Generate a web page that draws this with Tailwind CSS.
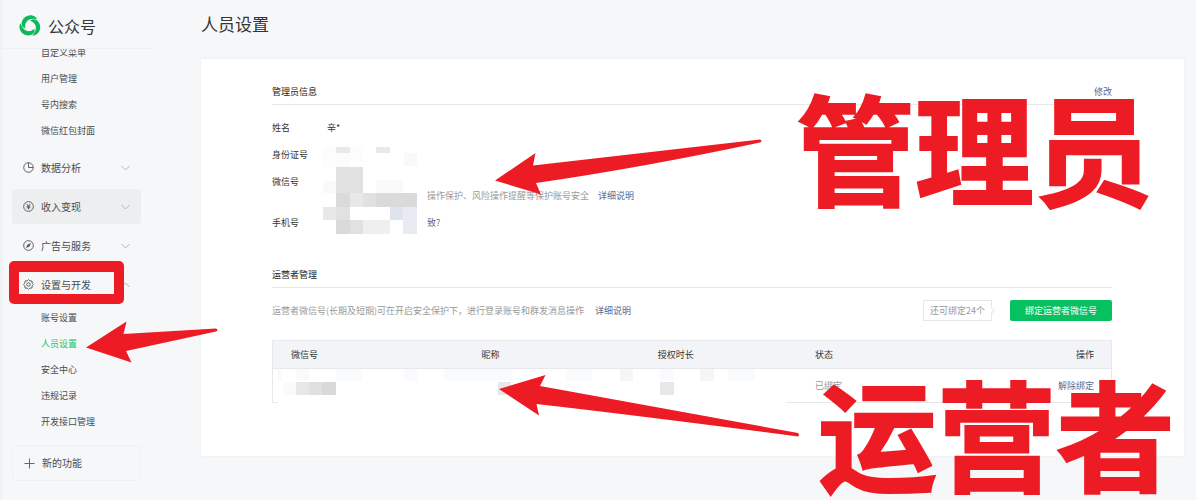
<!doctype html>
<html lang="zh-CN">
  <head>
    <meta charset="UTF-8" />
    <meta name="viewport" content="width=device-width, initial-scale=1.0" />
    <title>公众号 - 人员设置</title>
    <script src="https://cdn.jsdelivr.net/npm/@tailwindcss/browser@4"></script>
  </head>
  <body class="relative flex min-h-screen overflow-hidden bg-[#f6f7f9] font-['Noto_Sans_CJK_SC',sans-serif] text-[9px] leading-[14px] text-[#4a4b4d]">
    <!-- Sidebar -->
    <aside class="w-[154px] shrink-0 border-x border-l-2 border-[#f0f2f4] border-r-[#f4f5f7]">
      <div class="flex h-[49px] items-center gap-[7px] border-b border-[#eeeff1] pt-1 pl-[17px]">
        <svg class="size-[22px]" viewBox="0 0 22 22" fill="#10b85c" aria-hidden="true">
          <path id="blade" d="M3 6.200C5 1.500 9.500 -.6 14 .8C16.200 1.500 17.300 2.600 18 4.300C13 3 8.200 4.200 6.600 8.600C6 10.400 6 12 6.600 13.600C3.200 12.600 1.900 9.500 3 6.200Z" />
          <use href="#blade" transform="rotate(120 11 11)" />
          <use href="#blade" transform="rotate(240 11 11)" />
        </svg>
        <span class="text-[16px] leading-6 text-[#353535]">公众号</span>
      </div>
      <nav class="overflow-hidden pr-3 pl-[10px]">
        <ul class="-mt-[9px] pl-[29px]">
          <li><a href="#" class="block py-[6px]">自定义菜单</a></li>
          <li><a href="#" class="block py-[6px]">用户管理</a></li>
          <li><a href="#" class="block py-[6px]">号内搜索</a></li>
          <li><a href="#" class="block py-[6px]">微信红包封面</a></li>
        </ul>
        <div class="mt-[6px] space-y-1 text-[10px]">
          <button type="button" class="flex h-[35px] w-full items-center gap-[7px] rounded px-[11px]">
            <svg class="size-[11px]" viewBox="0 0 12 12" fill="none" stroke="#555" aria-hidden="true">
              <circle cx="6" cy="6" r="5.200" /><path d="M6 .8V6H11.200" />
            </svg>
            数据分析
            <svg class="ml-auto h-[6px] w-[9px]" viewBox="0 0 9 6" fill="none" stroke="#b2b4b6" aria-hidden="true"><path d="M.5 1L4.500 5L8.500 1" /></svg>
          </button>
          <button type="button" class="flex h-[35px] w-full items-center gap-[7px] rounded bg-[#edeef0] px-[11px]">
            <svg class="size-[11px]" viewBox="0 0 12 12" fill="none" stroke="#555" aria-hidden="true">
              <circle cx="6" cy="6" r="5.300" /><path d="M4 3.200L6 5.600L8 3.200M6 5.600V9M4 5.800H8M4 7.400H8" />
            </svg>
            收入变现
            <svg class="ml-auto h-[6px] w-[9px]" viewBox="0 0 9 6" fill="none" stroke="#b2b4b6" aria-hidden="true"><path d="M.5 1L4.500 5L8.500 1" /></svg>
          </button>
          <button type="button" class="flex h-[35px] w-full items-center gap-[7px] rounded px-[11px]">
            <svg class="size-[11px]" viewBox="0 0 12 12" fill="none" stroke="#555" aria-hidden="true">
              <circle cx="6" cy="6" r="5.300" /><path d="M8.800 3.200L5 5L3.200 8.800L7 7Z" fill="#555" stroke="none" />
            </svg>
            广告与服务
            <svg class="ml-auto h-[6px] w-[9px]" viewBox="0 0 9 6" fill="none" stroke="#b2b4b6" aria-hidden="true"><path d="M.5 1L4.500 5L8.500 1" /></svg>
          </button>
          <div class="relative">
            <button type="button" class="flex h-[35px] w-full items-center gap-[7px] rounded px-[11px]">
              <svg class="size-[11px]" viewBox="0 0 12 12" fill="none" stroke="#555" aria-hidden="true">
                <path d="M6 .6L7.400 2L9.800 2.200L10 4.600L11.400 6L10 7.400L9.800 9.800L7.400 10L6 11.400L4.600 10L2.200 9.800L2 7.400L.6 6L2 4.600L2.200 2.200L4.600 2Z" /><circle cx="6" cy="6" r="1.900" />
              </svg>
              设置与开发
              <svg class="ml-auto h-[6px] w-[9px]" viewBox="0 0 9 6" fill="none" stroke="#b2b4b6" aria-hidden="true"><path d="M.5 5L4.500 1L8.500 5" /></svg>
            </button>
            <!-- highlight frame -->
            <div class="absolute -top-[6px] -left-[3px] h-[43px] w-[115px] rounded-[5px] bg-[#ed1c24] [clip-path:polygon(evenodd,0_0,100%_0,100%_100%,0_100%,0_0,10px_11px,105px_11px,105px_33px,10px_33px,10px_11px)]"></div>
          </div>
        </div>
        <ul class="mt-[3px] pl-[29px]">
          <li><a href="#" class="block py-[6px]">账号设置</a></li>
          <li><a href="#" class="block py-[6px] text-[#20c36b]">人员设置</a></li>
          <li><a href="#" class="block py-[6px]">安全中心</a></li>
          <li><a href="#" class="block py-[6px]">违规记录</a></li>
          <li><a href="#" class="block py-[6px]">开发接口管理</a></li>
        </ul>
        <button type="button" class="mt-[10px] flex h-9 w-full items-center gap-[7px] rounded border border-[#eff0f2] px-[11px] text-[10px]">
          <svg class="size-[11px]" viewBox="0 0 11 11" fill="none" stroke="#666" aria-hidden="true"><path d="M5.500 .5V10.500M.5 5.500H10.500" /></svg>
          新的功能
        </button>
      </nav>
    </aside>

    <!-- Content -->
    <main class="min-w-0 flex-1 pt-[11px] pr-3 pl-[47px]">
      <h1 class="text-[17px] leading-[26px] text-[#353535]">人员设置</h1>
      <div class="mt-[22px] bg-white pt-[26px] pr-[72px] pb-[53px] pl-[71px] shadow-[0_0_3px_rgba(0,0,0,0.06)]">
        <section>
          <div class="flex justify-between border-b border-[#e7e8ea] pb-[5px]">
            <h2 class="text-[#222]">管理员信息</h2>
            <a href="#" class="text-[#576b95]">修改</a>
          </div>
          <dl class="relative mt-4 grid grid-cols-[55px_1fr] gap-y-[13px] text-[#353535]">
            <dt>姓名</dt>
            <dd>辛*</dd>
            <dt>身份证号</dt>
            <dd></dd>
            <dt>微信号</dt>
            <dd class="pt-[14px] pl-[100px] text-[#9a9a9a]">操作保护、风险操作提醒等保护账号安全 <a href="#" class="ml-[7px] text-[#576b95]">详细说明</a></dd>
            <dt>手机号</dt>
            <dd class="pl-[100px]"><a href="#" class="text-[#576b95]">致?</a></dd>
            <svg class="absolute top-[25px] left-[51px] h-[88px] w-[95px]" viewBox="323 146 95 88" shape-rendering="crispEdges" aria-hidden="true">
              <path fill="#fcfcfc" d="M323 147h13v20h-13zM350 147h13v15h-13zM336 153h14v14h-14z" />
              <path fill="#e9e9e9" d="M336 147h14v6h-14zM376 147h14v6h-14z" />
              <path fill="#f9f9f9" d="M404 153h13v13h-13zM376 180h27v13h-27zM323 181h13v12h-13z" />
              <path fill="#e1e1e1" d="M336 167h27v26h-27zM363 193h13v14h-13zM336 207h14v13h-14zM350 220h13v14h-13z" />
              <path fill="#dadada" d="M336 193h14v14h-14zM376 193h41v14h-41zM336 220h14v14h-14z" />
              <path fill="#e8e8e8" d="M350 193h13v14h-13zM323 207h13v13h-13z" />
              <path fill="#efefef" d="M363 220h27v14h-27z" />
              <path fill="#dfe3eb" d="M390 207h13v13h-13z" />
              <path fill="#e8ebf1" d="M403 207h14v27h-14z" />
            </svg>
          </dl>
        </section>

        <section class="mt-[38px]">
          <div class="border-b border-[#e7e8ea] pb-[5px]">
            <h2 class="text-[#222]">运营者管理</h2>
          </div>
          <div class="mt-3 flex items-center">
            <p class="text-[#9a9a9a]">运营者微信号(长期及短期)可在开启安全保护下，进行登录账号和群发消息操作 <a href="#" class="ml-[9px] text-[#576b95]">详细说明</a></p>
            <span class="relative ml-auto flex h-[21px] items-center border border-[#e7e7eb] px-[6px] text-[9px] text-[#9a9a9a]">
              还可绑定24个
              <i class="absolute top-[7px] -right-[3px] size-[5px] rotate-45 border-t border-r border-[#e7e7eb] bg-white"></i>
            </span>
            <button type="button" class="ml-[18px] h-[21px] w-[102px] rounded-xs bg-[#07c160] text-white">绑定运营者微信号</button>
          </div>
          <div class="relative mt-[19px]">
            <table class="w-full table-fixed border border-[#e7e8ec] text-left text-[#353535]">
              <thead class="bg-[#f3f4f7]">
                <tr class="h-[28px] border-b border-[#e7e8ec]">
                  <th class="w-[23%] pl-[18px] font-normal">微信号</th>
                  <th class="w-[21%] pl-4 font-normal">昵称</th>
                  <th class="w-[19%] pl-4 font-normal">授权时长</th>
                  <th class="w-[19%] pl-[14px] font-normal">状态</th>
                  <th class="pr-[17px] text-right font-normal">操作</th>
                </tr>
              </thead>
              <tbody>
                <tr class="h-[34px]">
                  <td></td>
                  <td></td>
                  <td></td>
                  <td class="pl-[14px] text-[#9a9a9a]">已绑定</td>
                  <td class="pr-[17px] text-right"><a href="#" class="text-[#576b95]">解除绑定</a></td>
                </tr>
              </tbody>
            </table>
            <svg class="absolute bottom-0 left-[6px] h-[34px] w-[508px]" viewBox="278 369 508 34" shape-rendering="crispEdges" aria-hidden="true">
              <path fill="#fff" d="M278 369h508v34h-508z" />
              <path fill="#f9fafb" d="M278 369h4v12h-4zM296 369h13v12h-13zM336 369h26v12h-26zM404 369h13v12h-13zM444 369h68v12h-68zM566 369h26v12h-26zM660 369h14v12h-14zM728 369h27v12h-27zM283 382h13v13h-13z" />
              <path fill="#f6f6f7" d="M620 369h13v12h-13zM700 369h14v12h-14z" />
              <path fill="#e7e7e7" d="M296 382h13v13h-13zM498 382h13v13h-13zM660 382h14v13h-14z" />
              <path fill="#e0e0e0" d="M309 382h13v13h-13z" />
              <path fill="#d9d9d9" d="M322 382h14v13h-14z" />
            </svg>
          </div>
        </section>
      </div>
    </main>

    <!-- Annotations drawn over the page -->
    <svg class="pointer-events-none absolute top-0 left-0 h-[500px] w-[1196px]" viewBox="0 0 1196 500" fill="#ed1c24" aria-hidden="true">
      <path d="M495 180.500L535.500 153L533 165.500L760 139.500Q763 141 760 142.500Q640 168 536 183L541 194.500Z" />
      <path d="M499 389L545.500 375L540 386L798 433Q800 435 798 436.500Q650 417 536.500 404L539 415.500Z" />
      <path d="M86 347.500L126.500 321.500L123.500 334L216 328.500Q219 330 216 331.500L126 351L131.500 362.500Z" />
    </svg>
    <p class="pointer-events-none absolute top-[86px] left-[796px] text-[119px] leading-[118px] font-bold whitespace-nowrap text-[#ed1c24] [-webkit-text-stroke:2px_#ed1c24]">管理员</p>
    <p class="pointer-events-none absolute top-[372px] left-[818px] text-[119px] leading-[118px] font-bold whitespace-nowrap text-[#ed1c24] [-webkit-text-stroke:2px_#ed1c24]">运营者</p>
  </body>
</html>
